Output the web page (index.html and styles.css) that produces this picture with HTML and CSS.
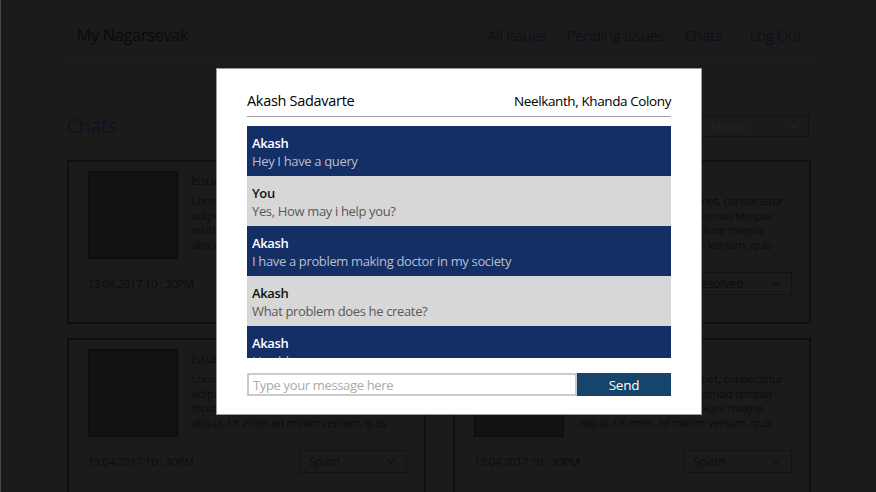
FILE: index.html
```html
<!DOCTYPE html>
<html>
<head>
<meta charset="utf-8">
<title>My Nagarsevak - Chats</title>
<link rel="stylesheet" href="styles.css">
</head>
<body>
<div class="screen">
  <div class="page">
    <header class="topbar">
      <div class="brand">My Nagarsevak</div>
      <nav class="nav">
        <a class="nav-link">All Issues</a>
        <a class="nav-link">Pending Issues</a>
        <a class="nav-link">Chats</a>
        <a class="nav-link nav-logout">Log Out</a>
      </nav>
    </header>

    <div class="title-row">
      <h1 class="page-title">Chats</h1>
      <div class="select select-status">
        <span>Status</span>
        <svg class="chev" viewBox="0 0 8 5" width="8" height="5"><path d="M0.5 0.5 L4 4 L7.5 0.5" fill="none" stroke="currentColor" stroke-width="1.2"/></svg>
      </div>
    </div>

    <div class="cards">
      <div class="card">
        <div class="card-body">
          <div class="thumb"></div>
          <div class="card-text">
            <div class="card-title">Issue Title</div>
            <p class="card-desc">Lorem ipsum dolor sit amet, consectetur<br>adipiscing elit, sed do eiusmod tempor<br>incididunt ut labore et dolore magna<br>aliqua. Ut enim ad minim veniam, quis</p>
          </div>
        </div>
        <div class="card-foot">
          <span class="date">13.04.2017 10 : 30PM</span>
          <div class="select"><span>Pending</span><svg class="chev" viewBox="0 0 8 5" width="8" height="5"><path d="M0.5 0.5 L4 4 L7.5 0.5" fill="none" stroke="currentColor" stroke-width="1.2"/></svg></div>
        </div>
      </div>
      <div class="card">
        <div class="card-body">
          <div class="thumb"></div>
          <div class="card-text">
            <div class="card-title">Issue Title</div>
            <p class="card-desc">Lorem ipsum dolor sit amet, consectetur<br>adipiscing elit, sed do eiusmod tempor<br>incididunt ut labore et dolore magna<br>aliqua. Ut enim ad minim veniam, quis</p>
          </div>
        </div>
        <div class="card-foot">
          <span class="date">13.04.2017 10 : 30PM</span>
          <div class="select"><span>Resolved</span><svg class="chev" viewBox="0 0 8 5" width="8" height="5"><path d="M0.5 0.5 L4 4 L7.5 0.5" fill="none" stroke="currentColor" stroke-width="1.2"/></svg></div>
        </div>
      </div>
      <div class="card">
        <div class="card-body">
          <div class="thumb"></div>
          <div class="card-text">
            <div class="card-title">Issue Title</div>
            <p class="card-desc">Lorem ipsum dolor sit amet, consectetur<br>adipiscing elit, sed do eiusmod tempor<br>incididunt ut labore et dolore magna<br>aliqua. Ut enim ad minim veniam, quis</p>
          </div>
        </div>
        <div class="card-foot">
          <span class="date">13.04.2017 10 : 30PM</span>
          <div class="select"><span>Spam</span><svg class="chev" viewBox="0 0 8 5" width="8" height="5"><path d="M0.5 0.5 L4 4 L7.5 0.5" fill="none" stroke="currentColor" stroke-width="1.2"/></svg></div>
        </div>
      </div>
      <div class="card">
        <div class="card-body">
          <div class="thumb"></div>
          <div class="card-text">
            <div class="card-title">Issue Title</div>
            <p class="card-desc">Lorem ipsum dolor sit amet, consectetur<br>adipiscing elit, sed do eiusmod tempor<br>incididunt ut labore et dolore magna<br>aliqua. Ut enim ad minim veniam, quis</p>
          </div>
        </div>
        <div class="card-foot">
          <span class="date">13.04.2017 10 : 30PM</span>
          <div class="select"><span>Spam</span><svg class="chev" viewBox="0 0 8 5" width="8" height="5"><path d="M0.5 0.5 L4 4 L7.5 0.5" fill="none" stroke="currentColor" stroke-width="1.2"/></svg></div>
        </div>
      </div>
    </div>
  </div>

  <div class="modal">
    <div class="modal-head">
      <span class="person">Akash Sadavarte</span>
      <span class="address">Neelkanth, Khanda Colony</span>
    </div>
    <div class="messages">
      <div class="msg msg-in"><div class="msg-name">Akash</div><div class="msg-text">Hey I have a query</div></div>
      <div class="msg msg-out"><div class="msg-name">You</div><div class="msg-text">Yes, How may i help you?</div></div>
      <div class="msg msg-in"><div class="msg-name">Akash</div><div class="msg-text">I have a problem making doctor in my society</div></div>
      <div class="msg msg-out"><div class="msg-name">Akash</div><div class="msg-text">What problem does he create?</div></div>
      <div class="msg msg-in"><div class="msg-name">Akash</div><div class="msg-text">He able</div></div>
    </div>
    <div class="composer">
      <input class="composer-input" type="text" placeholder="Type your message here">
      <button class="send-btn">Send</button>
    </div>
  </div>
</div>
</body>
</html>
```

FILE: styles.css
```css
* { box-sizing: border-box; }

html, body {
  margin: 0;
  padding: 0;
  height: 100%;
  background: #1b1b1b;
}

body {
  font-family: "Open Sans", "Noto Sans", sans-serif;
  overflow: hidden;
}

.screen {
  position: relative;
  width: 876px;
  height: 492px;
  border-left: 1px solid #4a4a4a;
  overflow: hidden;
}

.page {
  width: 744px;
  margin: 0 auto;
}

/* header */
.topbar {
  height: 58px;
  padding: 23px 9px 0 10px;
  display: flex;
  justify-content: space-between;
  align-items: flex-start;
  border-bottom: 1px solid #1f1f1f;
}

.brand {
  font-size: 16.5px;
  line-height: 24px;
  color: #0a0a0a;
  letter-spacing: -0.4px;
}

.nav {
  display: flex;
  gap: 20px;
}

.nav-link {
  font-size: 15px;
  line-height: 24px;
  color: #0d1019;
  letter-spacing: -0.45px;
}

.nav-logout { margin-left: 8px; }

/* title row */
.title-row {
  margin-top: 54px;
  height: 28px;
  display: flex;
  justify-content: space-between;
  align-items: center;
}

.page-title {
  margin: 0;
  font-size: 20px;
  font-weight: 400;
  line-height: 28px;
  color: #0e1320;
  letter-spacing: -0.6px;
}

.select {
  width: 108px;
  height: 23px;
  border: 1px solid #121212;
  display: flex;
  align-items: center;
  justify-content: space-between;
  padding: 0 11px 0 9px;
  font-size: 12px;
  color: #0d0d0d;
}

.select-status {
  margin-right: 2px;
  height: 22px;
  color: #262626;
}

.chev { color: #0f0f0f; }
.select-status .chev { color: #242424; }

/* cards */
.cards {
  margin-top: 20px;
  display: grid;
  grid-template-columns: 359px 358px;
  column-gap: 27px;
  row-gap: 14px;
}

.card {
  height: 164px;
  border: 2px solid #101010;
  padding: 9px 17px 0 19px;
}

.card-body {
  display: flex;
  gap: 14px;
  height: 88px;
}

.thumb {
  flex: none;
  width: 90px;
  height: 88px;
  background: #121212;
  border: 1px solid #0b0b0b;
}

.card-text {
  color: #0c0c0c;
  letter-spacing: -0.3px;
}

.card-title {
  margin-top: 2px;
  font-size: 12.5px;
  line-height: 16px;
}

.card-desc {
  margin: 5px 0 0;
  font-size: 11.5px;
  line-height: 14.5px;
  white-space: nowrap;
}

.card-foot {
  margin-top: 13px;
  display: flex;
  justify-content: space-between;
  align-items: center;
  height: 22px;
}

.date {
  font-size: 11.5px;
  color: #0c0c0c;
  letter-spacing: -0.4px;
}

/* modal */
.modal {
  position: absolute;
  left: 215px;
  top: 68px;
  width: 486px;
  height: 347px;
  background: #fff;
  border: 1px solid #9a9a9a;
  padding: 0 30px;
}

.modal-head {
  display: flex;
  justify-content: space-between;
  align-items: center;
  padding: 22px 0 5px;
  border-bottom: 1px solid #a0a0a0;
  line-height: 20px;
}

.person {
  font-size: 14.5px;
  font-weight: 500;
  color: #000;
  letter-spacing: -0.3px;
}

.address {
  font-size: 13.5px;
  color: #000;
  letter-spacing: -0.4px;
}

.messages {
  margin-top: 9px;
  height: 232px;
  overflow: hidden;
}

.msg {
  height: 50px;
  padding: 8px 5px 0;
  line-height: 18px;
  letter-spacing: -0.35px;
}

.msg-name {
  font-size: 13px;
  font-weight: 600;
}

.msg-text {
  font-size: 13px;
}

.msg-in { background: #142e66; }
.msg-in .msg-name { color: #fff; }
.msg-in .msg-text { color: #b9bfcc; }

.msg-out { background: #d7d7d7; }
.msg-out .msg-name { color: #111; }
.msg-out .msg-text { color: #595959; }

.composer {
  margin-top: 15px;
  display: flex;
  height: 23px;
}

.composer-input {
  flex: 1;
  min-width: 0;
  height: 23px;
  margin: 0;
  border: 2px solid #cbcbcb;
  padding: 0 4px;
  font-family: inherit;
  font-size: 13px;
  letter-spacing: -0.35px;
  outline: none;
}

.composer-input::placeholder { color: #aaa; }

.send-btn {
  width: 94px;
  height: 23px;
  margin: 0;
  border: 0;
  background: #17446a;
  color: #fff;
  font-family: inherit;
  font-size: 13.5px;
  letter-spacing: -0.2px;
  padding: 0;
}
```
